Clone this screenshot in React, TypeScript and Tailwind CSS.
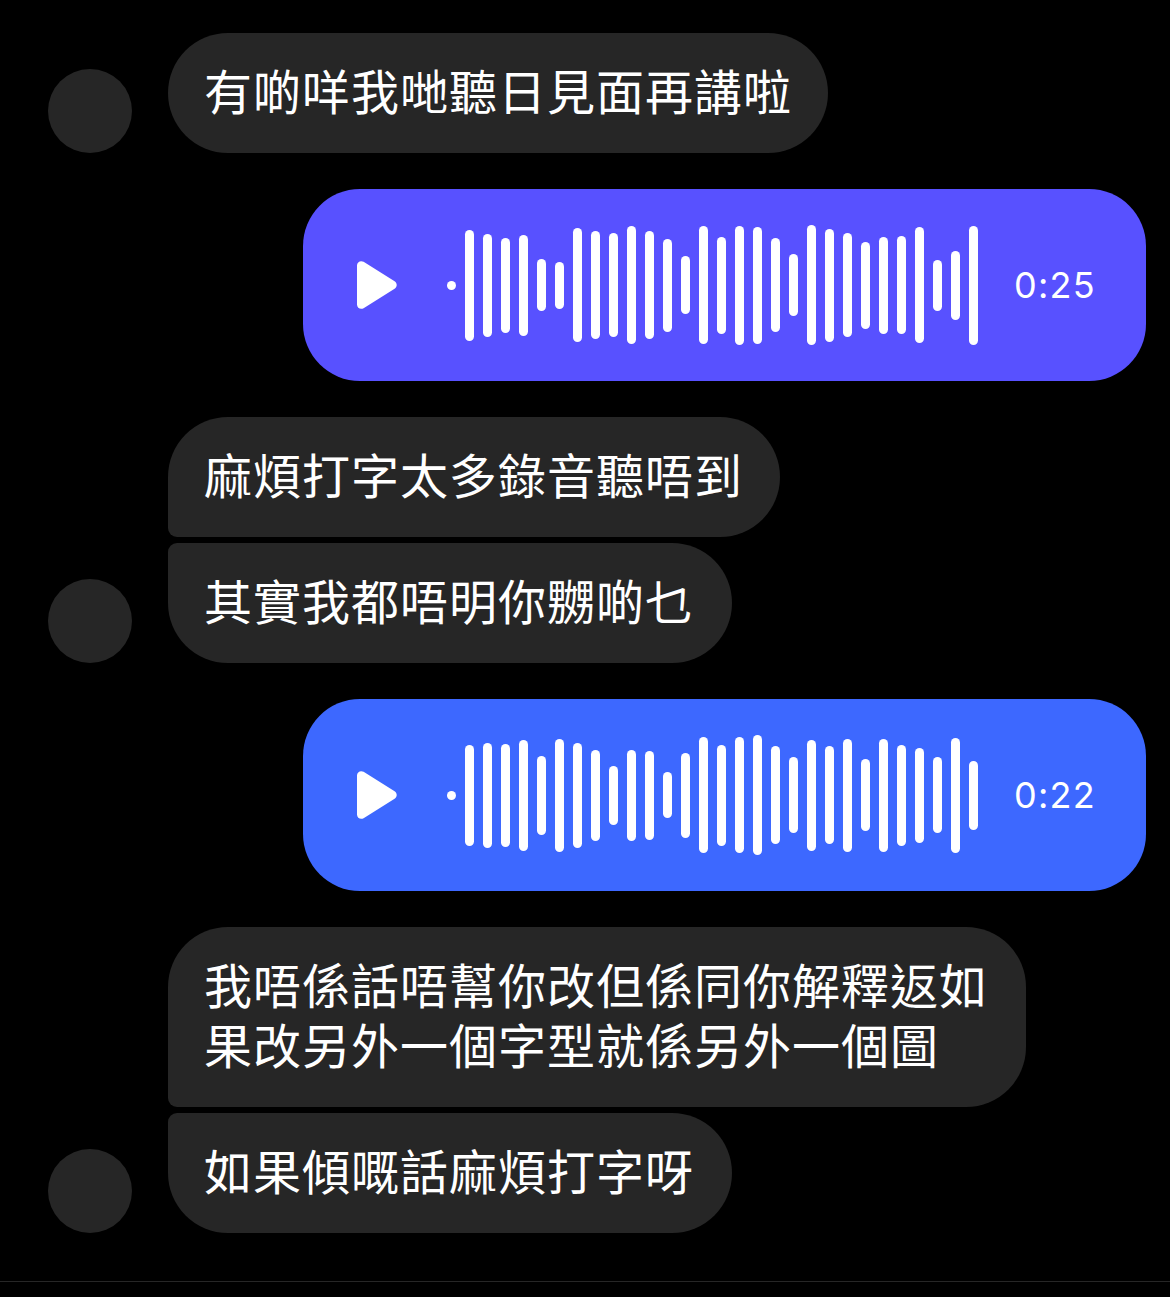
import React from 'react';

const waveA = [111, 103, 95, 101, 52, 47, 114, 108, 104, 118, 108, 93, 58, 118, 97, 119, 117, 94, 62, 120, 113, 104, 87, 97, 98, 116, 51, 69, 119];
const waveB = [101, 105, 103, 111, 79, 113, 105, 91, 59, 91, 89, 46, 85, 116, 101, 116, 120, 98, 76, 111, 98, 113, 72, 113, 101, 95, 76, 115, 69];

function Avatar() {
  return <div className="w-[84px] h-[84px] rounded-full bg-[#262626] shrink-0" />;
}

function Bubble({ className, children }: { className: string; children: React.ReactNode }) {
  return (
    <div className={`px-[36px] pt-[26px] pb-[34px] bg-[#262626] text-white text-[48px] leading-[60px] tracking-[1px] whitespace-nowrap ${className}`}>
      {children}
    </div>
  );
}

function Voice({ bars, time, color }: { bars: number[]; time: string; color: string }) {
  return (
    <div className="flex justify-end pr-[24px]">
      <div className={`flex items-center w-[843px] h-[192px] rounded-[57px] pl-[54px] ${color}`}>
        <svg className="w-[40px] h-[48px] shrink-0" viewBox="0 0 40 48">
          <path
            d="M0 4.5C0 1 3.6 -1 6.6 .8L37.6 20.3C40.4 22 40.4 26 37.6 27.7L6.6 47.2C3.6 49 0 47 0 43.5Z"
            fill="#fff"
          />
        </svg>
        <div className="flex items-center gap-[9px] ml-[50px]">
          <div className="w-[9px] h-[9px] rounded-full bg-white" />
          {bars.map((h, i) => (
            <div key={i} className="w-[9px] rounded-full bg-white" style={{ height: h }} />
          ))}
        </div>
        <div className="ml-[36px] text-white text-[36px] leading-none tracking-[1.2px] font-normal font-['Inter',sans-serif]">{time}</div>
      </div>
    </div>
  );
}

export default function App() {
  return (
    <div className="w-[1170px] h-[1297px] overflow-hidden bg-black pt-[33px] font-['Noto_Sans_CJK_TC','Noto_Sans_CJK_SC',sans-serif] font-normal">
      <div className="flex flex-col gap-[36px]">
        {/* first message */}
        <div className="flex items-end gap-[36px] pl-[48px]">
          <Avatar />
          <Bubble className="w-[660px] rounded-[60px]">有啲咩我哋聽日見面再講啦</Bubble>
        </div>

        <Voice bars={waveA} time="0:25" color="bg-[#5851ff]" />

        <div className="flex items-end gap-[36px] pl-[48px]">
          <Avatar />
          <div className="flex flex-col gap-[6px]">
            <Bubble className="w-[612px] rounded-[60px] rounded-bl-[9px]">麻煩打字太多錄音聽唔到</Bubble>
            <Bubble className="w-[564px] rounded-[60px] rounded-tl-[9px]">其實我都唔明你嬲啲乜</Bubble>
          </div>
        </div>

        <Voice bars={waveB} time="0:22" color="bg-[#3d68ff]" />

        <div className="flex items-end gap-[36px] pl-[48px]">
          <Avatar />
          <div className="flex flex-col gap-[6px]">
            <Bubble className="w-[858px] rounded-[60px] rounded-bl-[9px]">
              我唔係話唔幫你改但係同你解釋返如
              <br />
              果改另外一個字型就係另外一個圖
            </Bubble>
            <Bubble className="w-[564px] rounded-[60px] rounded-tl-[9px]">如果傾嘅話麻煩打字呀</Bubble>
          </div>
        </div>
      </div>

      {/* composer divider */}
      <div className="mt-[48px] h-[1px] bg-[#262626]" />
    </div>
  );
}
